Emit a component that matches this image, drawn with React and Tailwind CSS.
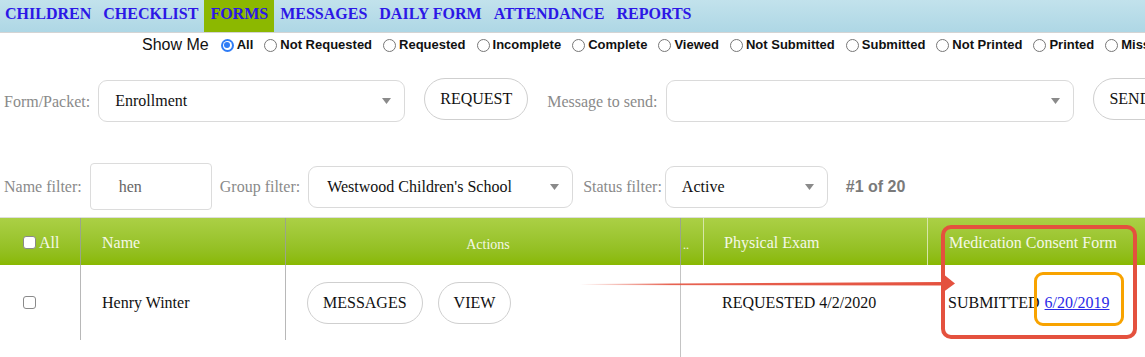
import React from 'react';

const serif = "font-['Liberation_Serif',serif]";
const sans = "font-['Liberation_Sans',Arial,sans-serif]";

const navItems = ['CHILDREN', 'CHECKLIST', 'FORMS', 'MESSAGES', 'DAILY FORM', 'ATTENDANCE', 'REPORTS'];

const filters = [
  'All',
  'Not Requested',
  'Requested',
  'Incomplete',
  'Complete',
  'Viewed',
  'Not Submitted',
  'Submitted',
  'Not Printed',
  'Printed',
  'Missing',
];

function Caret() {
  return (
    <svg width="9" height="6" viewBox="0 0 9 6" className="shrink-0">
      <path d="M0 0 L9 0 L4.5 6 Z" fill="#8a8a8a" />
    </svg>
  );
}

function Select({ value, width, textPad = 'pl-4' }) {
  return (
    <div
      className={`flex items-center justify-between h-[42px] bg-white border border-[#dadada] rounded-[9px] pr-[13px] ${textPad} ${width}`}
    >
      <span className="text-[16px] text-[#111] whitespace-nowrap">{value}</span>
      <Caret />
    </div>
  );
}

function PillButton({ children, className = '' }) {
  return (
    <div
      className={`flex items-center h-[42px] px-[15px] bg-white border border-[#cfcfcf] rounded-full text-[16px] text-[#111] whitespace-nowrap shrink-0 ${className}`}
    >
      {children}
    </div>
  );
}

function Radio({ checked }) {
  if (checked) {
    return (
      <span className="w-[13px] h-[13px] rounded-full bg-[#2f7cf6] flex items-center justify-center shrink-0">
        <span className="w-[9px] h-[9px] rounded-full bg-white flex items-center justify-center">
          <span className="w-[6px] h-[6px] rounded-full bg-[#2f7cf6]" />
        </span>
      </span>
    );
  }
  return <span className="w-[13px] h-[13px] rounded-full border border-[#777] bg-white shrink-0" />;
}

function Checkbox() {
  return <span className="inline-block w-[13px] h-[13px] rounded-[3px] border border-[#8a8a8a] bg-white shrink-0" />;
}

export default function App() {
  return (
    <div className={`relative w-[1145px] h-[357px] overflow-hidden bg-white ${serif}`}>
      {/* top navigation */}
      <div className="flex h-[33px] bg-gradient-to-b from-[#c2e2ec] to-[#aed7e5] border-b border-[#d4d4d4]">
        {navItems.map((item) => (
          <div
            key={item}
            className={`px-[6px] pt-[5px] text-[16px] leading-[18px] font-bold text-[#2c17e6] whitespace-nowrap ${
              item === 'FORMS' ? 'bg-[#8cb800]' : ''
            } ${item === 'CHILDREN' ? 'pl-[5px]' : ''}`}
          >
            {item}
          </div>
        ))}
      </div>

      {/* show me radios */}
      <div className={`flex items-center h-[24px] pl-[142px] whitespace-nowrap ${sans}`}>
        <span className="text-[16px] text-[#111] mr-3">Show Me</span>
        {filters.map((f, i) => (
          <span key={f} className="flex items-center mr-[11px]">
            <Radio checked={i === 0} />
            <span className="ml-[3px] text-[13px] font-bold text-[#111]">{f}</span>
          </span>
        ))}
      </div>

      {/* form / message row */}
      <div className="flex items-start pl-1 mt-[21px] h-[44px] whitespace-nowrap">
        <span className="text-[16px] text-[#8a8a8a] mt-[12px]">Form/Packet:</span>
        <div className="ml-2 mt-[2px]">
          <Select value="Enrollment" width="w-[307px]" />
        </div>
        <PillButton className="ml-[19px]">REQUEST</PillButton>
        <span className="ml-[19px] text-[16px] text-[#8a8a8a] mt-[12px]">Message to send:</span>
        <div className="ml-[9px] mt-[2px]">
          <Select value="" width="w-[408px]" />
        </div>
        <PillButton className="ml-[19px] pr-10">SEND</PillButton>
      </div>

      {/* filters row */}
      <div className="flex items-center pl-1 mt-[41px] h-[47px] whitespace-nowrap">
        <span className="text-[16px] text-[#8a8a8a]">Name filter:</span>
        <div className="ml-2 w-[122px] h-[47px] border border-[#dcdcdc] rounded-[4px] flex items-center pl-[28px] text-[16px] text-[#666]">
          hen
        </div>
        <span className="ml-2 text-[16px] text-[#8a8a8a]">Group filter:</span>
        <div className="ml-2">
          <Select value="Westwood Children's School" width="w-[265px]" textPad="pl-[18px]" />
        </div>
        <span className="ml-[10px] text-[16px] text-[#8a8a8a]">Status filter:</span>
        <div className="ml-[3px]">
          <Select value="Active" width="w-[163px]" />
        </div>
        <span className={`ml-[18px] text-[16px] font-bold text-[#7a7a7a] ${sans}`}>#1 of 20</span>
      </div>

      {/* table */}
      <div className="mt-[7px] border-t border-[#dedede]">
        <div className="flex h-[47px] bg-gradient-to-b from-[#abd045] to-[#89b800] text-[#f4f8e6] text-[16px] whitespace-nowrap">
          <div className="w-[80px] flex items-center pl-[23px] pt-[2px] shrink-0">
            <Checkbox />
            <span className="ml-[3px]">All</span>
          </div>
          <div className="w-[205px] flex items-center pl-[21px] pt-[3px] border-l border-[#9aa58a] shrink-0">Name</div>
          <div className="w-[395px] flex items-center justify-center pt-[6px] pl-[10px] text-[14px] border-l border-[#9aa58a] shrink-0">
            Actions
          </div>
          <div className="w-[23px] flex items-center pl-[2px] pt-[6px] text-[12px] border-l border-[#9aa58a] shrink-0">
            ..
          </div>
          <div className="w-[224px] flex items-center pl-[20px] pt-[3px] border-l border-[#d6e6a8] shrink-0">
            Physical Exam
          </div>
          <div className="w-[260px] flex items-center pl-[21px] pt-[3px] border-l border-[#d6e6a8] shrink-0">
            Medication Consent Form
          </div>
        </div>

        <div className="flex h-[75px] text-[16px] text-[#111] whitespace-nowrap">
          <div className="w-[80px] flex items-center pl-[23px] shrink-0">
            <Checkbox />
          </div>
          <div className="w-[205px] flex items-center pl-[21px] border-l border-[#b8b8b8] shrink-0">Henry Winter</div>
          <div className="w-[395px] flex items-center pl-[21px] gap-[15px] border-l border-[#b8b8b8] shrink-0">
            <PillButton>MESSAGES</PillButton>
            <PillButton>VIEW</PillButton>
          </div>
          <div className="w-[23px] border-l border-[#c4c4c4] shrink-0" />
          <div className="w-[224px] flex items-center pl-[19px] shrink-0">REQUESTED 4/2/2020</div>
          <div className="w-[260px] flex items-center pl-[21px] shrink-0">
            SUBMITTED
            <a href="#" className="ml-[5px] text-[#2a2ae8] underline">
              6/20/2019
            </a>
          </div>
        </div>
        <div className="flex h-[20px]">
          <div className="w-[680px] shrink-0" />
          <div className="w-[23px] border-l border-[#c4c4c4] shrink-0" />
        </div>
      </div>

      {/* annotations */}
      <svg className="absolute left-[578px] top-[272px]" width="380" height="22" viewBox="0 0 380 22">
        <defs>
          <linearGradient id="arrowFade" x1="0" y1="0" x2="1" y2="0">
            <stop offset="0" stopColor="#e4513e" stopOpacity="0" />
            <stop offset="0.25" stopColor="#e4513e" stopOpacity="0.9" />
            <stop offset="1" stopColor="#e4513e" />
          </linearGradient>
        </defs>
        <path d="M2 12 L366 10 L366 13.5 L2 13 Z" fill="url(#arrowFade)" />
        <path d="M364 1 L377 11.5 L364 21 Z" fill="#e4513e" />
      </svg>
      <div className="absolute left-[941px] top-[225px] w-[196px] h-[114px] border-4 border-[#e4513e] rounded-[10px]" />
      <div className="absolute left-[1034px] top-[272px] w-[90px] h-[54px] border-[3px] border-[#f8a300] rounded-[9px]" />
    </div>
  );
}
